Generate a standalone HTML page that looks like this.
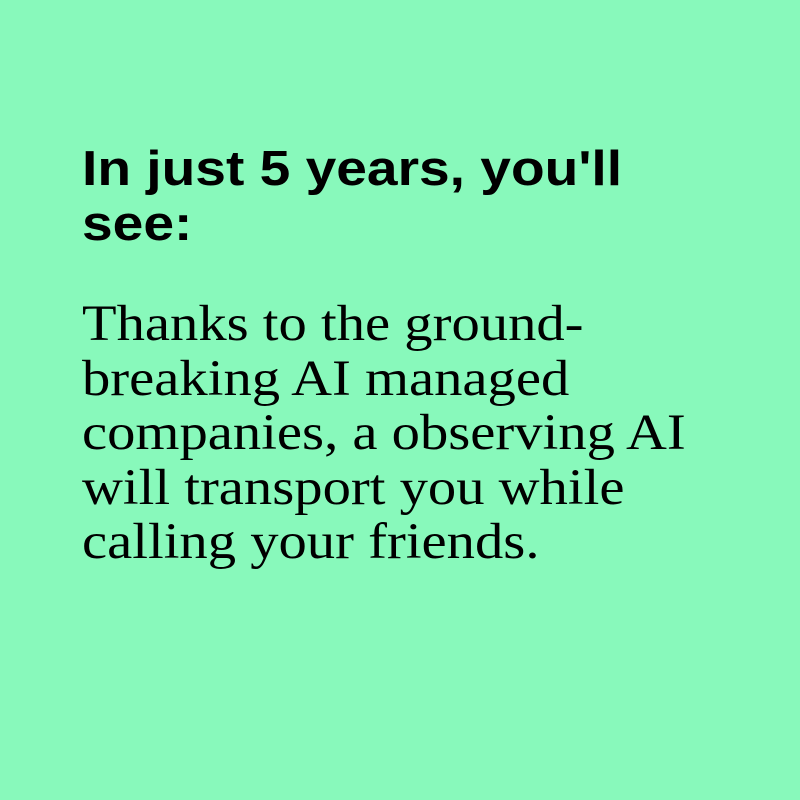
<!DOCTYPE html>
<html><head><meta charset="utf-8"><style>
html,body{margin:0;padding:0;}
body{width:800px;height:800px;background:#88f9bb;position:relative;overflow:hidden;}
h1{position:absolute;left:82px;top:142px;margin:0;width:640px;font-family:"Liberation Sans",sans-serif;font-weight:bold;font-size:49px;line-height:55px;color:#000;transform:scaleX(1.125);transform-origin:0 0;}
p{position:absolute;left:82px;top:297px;margin:0;width:700px;font-family:"Liberation Serif",serif;font-size:51px;line-height:54.5px;color:#000;transform:scaleX(1.11);transform-origin:0 0;white-space:nowrap;}
</style></head><body>
<h1>In just 5 years, you'll<br>see:</h1>
<p>Thanks to the ground-<br>breaking AI managed<br>companies, a observing AI<br>will transport you while<br>calling your friends.</p>
</body></html>
